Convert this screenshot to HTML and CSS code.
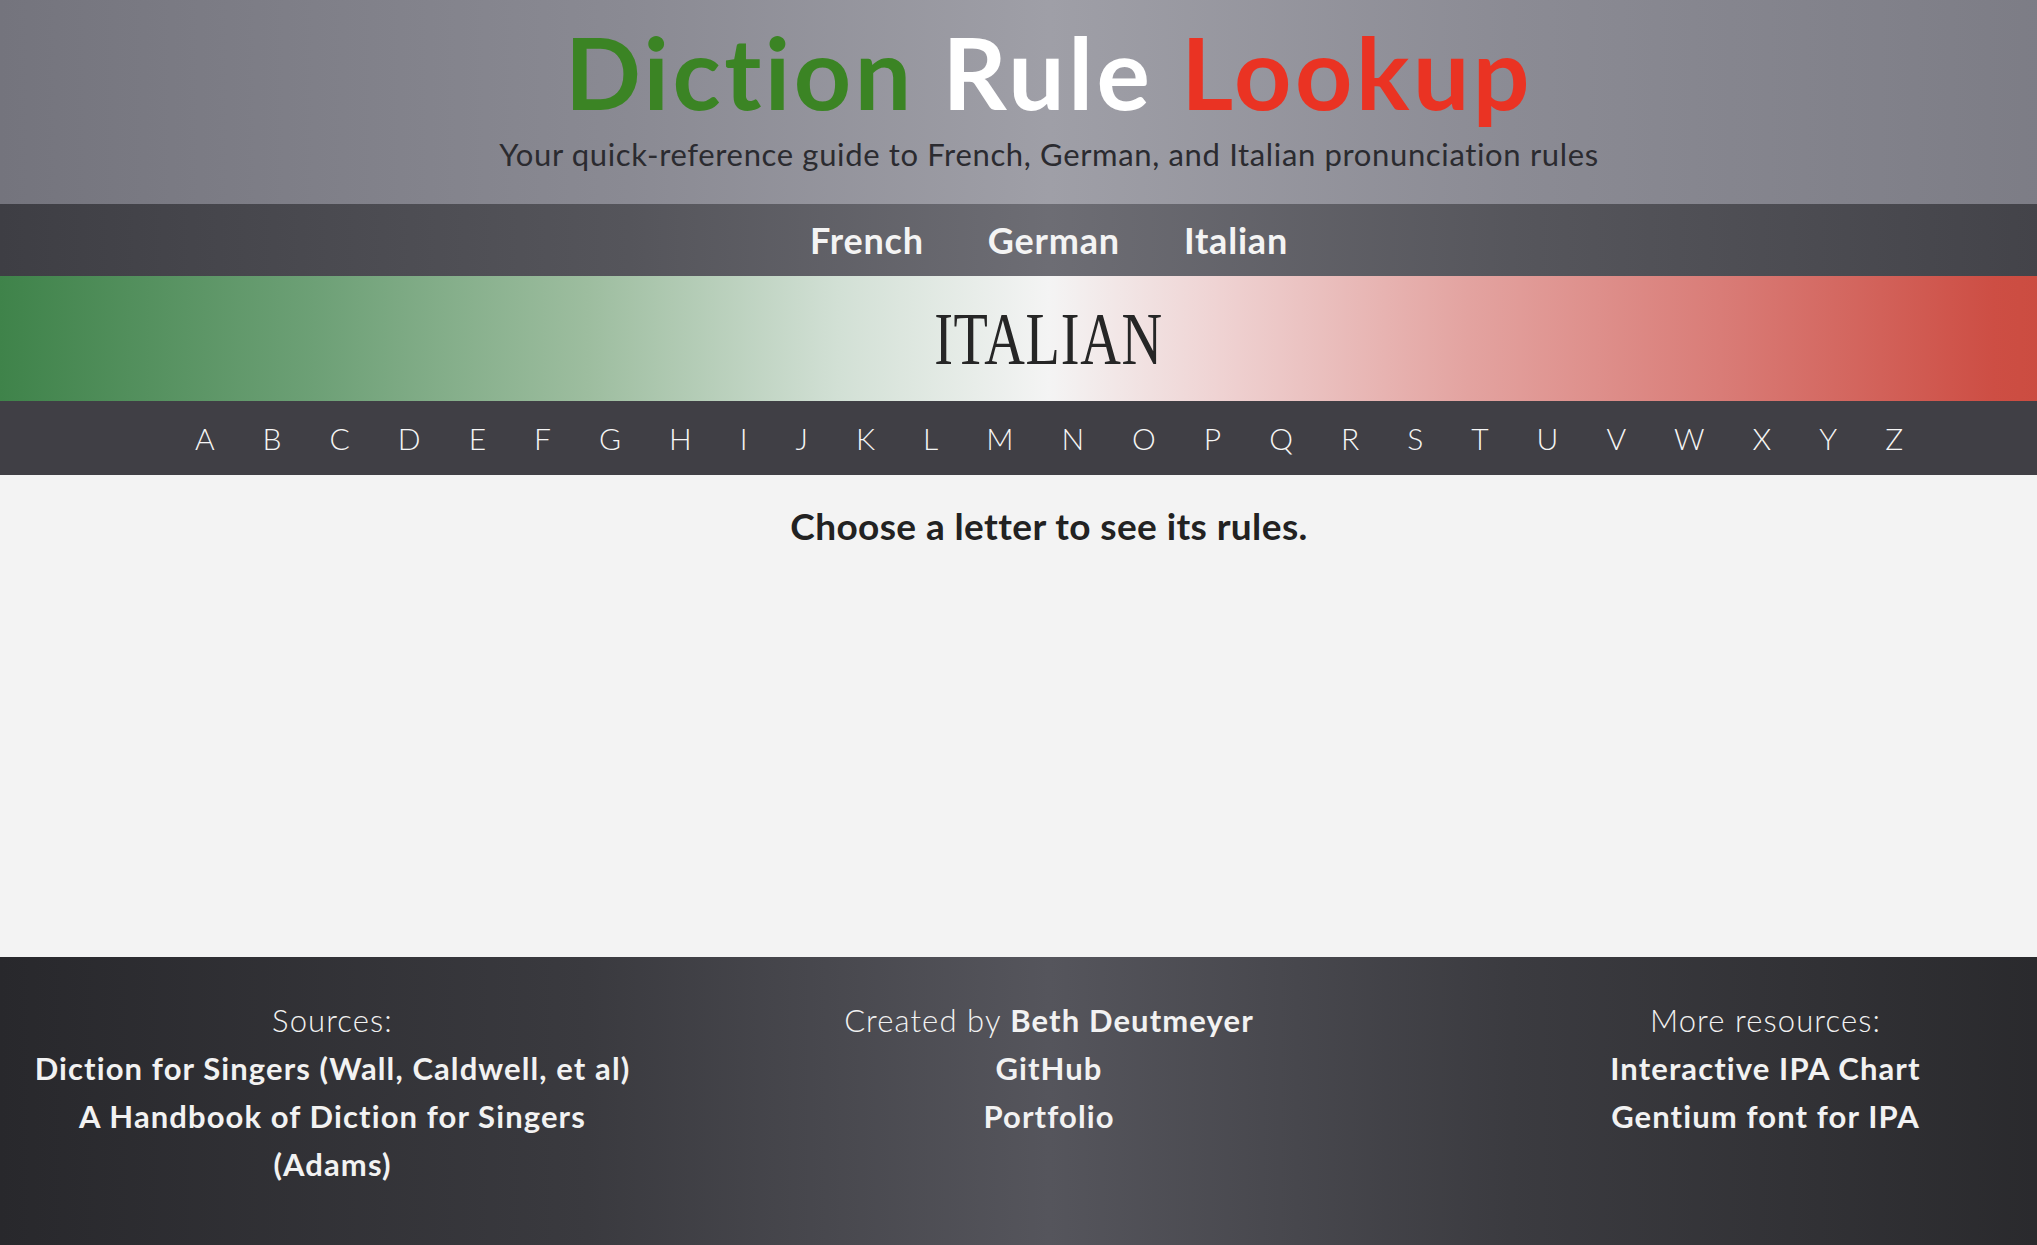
FILE: index.html
```html
<!DOCTYPE html>
<html lang="en">
<head>
<meta charset="utf-8">
<title>Diction Rule Lookup</title>
<link rel="stylesheet" href="styles.css">
</head>
<body>
<div class="page">
  <header class="masthead">
    <h1 class="title"><span class="t-green">Diction</span> <span class="t-white">Rule</span> <span class="t-red">Lookup</span></h1>
    <p class="subtitle">Your quick-reference guide to French, German, and Italian pronunciation rules</p>
  </header>
  <nav class="lang-nav">
    <a class="lang-link" href="#">French</a>
    <a class="lang-link" href="#">German</a>
    <a class="lang-link" href="#">Italian</a>
  </nav>
  <section class="banner">
    <h2 class="banner-title">ITALIAN</h2>
  </section>
  <ul class="alphabet">
    <li><a href="#">A</a></li><li><a href="#">B</a></li><li><a href="#">C</a></li><li><a href="#">D</a></li><li><a href="#">E</a></li><li><a href="#">F</a></li><li><a href="#">G</a></li><li><a href="#">H</a></li><li><a href="#">I</a></li><li><a href="#">J</a></li><li><a href="#">K</a></li><li><a href="#">L</a></li><li><a href="#">M</a></li><li><a href="#">N</a></li><li><a href="#">O</a></li><li><a href="#">P</a></li><li><a href="#">Q</a></li><li><a href="#">R</a></li><li><a href="#">S</a></li><li><a href="#">T</a></li><li><a href="#">U</a></li><li><a href="#">V</a></li><li><a href="#">W</a></li><li><a href="#">X</a></li><li><a href="#">Y</a></li><li><a href="#">Z</a></li>
  </ul>
  <main class="content">
    <p class="prompt">Choose a letter to see its rules.</p>
  </main>
  <footer class="footer">
    <div class="f-col">
      <p class="f-label">Sources:</p>
      <a class="f-link" href="#">Diction for Singers (Wall, Caldwell, et al)</a>
      <a class="f-link" href="#">A Handbook of Diction for Singers (Adams)</a>
    </div>
    <div class="f-col">
      <p class="f-label">Created by <a class="f-strong" href="#">Beth Deutmeyer</a></p>
      <a class="f-link" href="#">GitHub</a>
      <a class="f-link" href="#">Portfolio</a>
    </div>
    <div class="f-col">
      <p class="f-label">More resources:</p>
      <a class="f-link" href="#">Interactive IPA Chart</a>
      <a class="f-link" href="#">Gentium font for IPA</a>
    </div>
  </footer>
</div>
</body>
</html>
```

FILE: styles.css
```css
html, body {
  margin: 0;
  padding: 0;
  overflow-x: hidden;
}
body {
  font-family: Lato, "Noto Sans", sans-serif;
  background: #f3f3f3;
}
.page {
  width: 2098px;
}
a {
  color: inherit;
  text-decoration: none;
}

.masthead {
  background: linear-gradient(90deg, #74747d 0%, #8a8a93 30%, #9f9fa7 50%, #8b8b94 72%, #7b7b84 100%);
  text-align: center;
  padding: 16px 0 30px;
}
.title {
  margin: 0;
  font-size: 100px;
  line-height: 110px;
  font-weight: 700;
  letter-spacing: 3.5px;
}
.t-green { color: #3b8424; }
.t-white { color: #ffffff; }
.t-red { color: #ea3323; }
.subtitle {
  margin: 8px 0 0;
  font-size: 31px;
  line-height: 40px;
  letter-spacing: 0.65px;
  color: #2b2b30;
}

.lang-nav {
  height: 72px;
  display: flex;
  justify-content: center;
  align-items: center;
  gap: 64px;
  background: linear-gradient(90deg, #3e3e44 0%, #55555b 30%, #6d6d74 50%, #56565c 72%, #414147 100%);
}
.lang-link {
  color: #f4f4f4;
  font-size: 36px;
  font-weight: 700;
  letter-spacing: 0.8px;
}

.banner {
  height: 125px;
  display: flex;
  justify-content: center;
  align-items: center;
  background: linear-gradient(90deg, #3f834a 0%, #6da076 15%, #9dbd9f 28%, #d2e0d5 40%, #f4f4f4 50%, #efd3d3 58%, #e3a3a0 70%, #d97c77 82%, #cd4e44 95%, #c94a3c 100%);
}
.banner-title {
  margin: 0;
  font-family: "Liberation Serif", "DejaVu Serif", serif;
  font-weight: 400;
  font-size: 74px;
  line-height: 1;
  color: #262626;
  transform: scaleX(0.76);
  letter-spacing: 1px;
}

.alphabet {
  list-style: none;
  margin: 0;
  padding: 0;
  height: 74px;
  display: flex;
  justify-content: center;
  align-items: center;
  gap: 48px;
  background: #403f45;
}
.alphabet a {
  color: #f6f6f6;
  font-size: 30px;
  font-weight: 300;
}

.content {
  height: 482px;
  background: #f3f3f3;
  text-align: center;
}
.prompt {
  margin: 0;
  padding-top: 29px;
  font-size: 37px;
  line-height: 44px;
  font-weight: 700;
  letter-spacing: 0.4px;
  color: #222222;
}

.footer {
  height: 288px;
  box-sizing: border-box;
  padding: 39px 20px 0;
  display: flex;
  justify-content: space-between;
  background: linear-gradient(90deg, #28282c 0%, #3a3a3f 28%, #55555c 50%, #3b3b40 72%, #28282b 100%);
  color: #f2f2f2;
}
.f-col {
  width: 625px;
  display: flex;
  flex-direction: column;
  align-items: center;
  text-align: center;
  font-size: 31px;
  line-height: 48px;
  letter-spacing: 1.1px;
}
.f-label {
  margin: 0;
  font-weight: 300;
}
.f-strong {
  font-weight: 700;
}
.f-link {
  font-weight: 700;
}
```
